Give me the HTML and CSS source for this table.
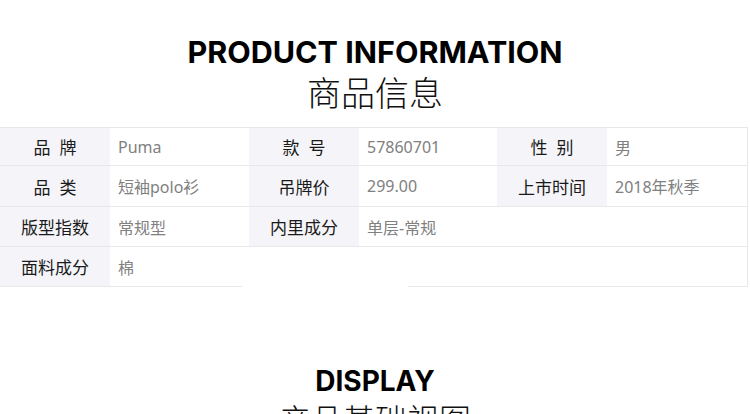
FILE: index.html
```html
<!DOCTYPE html>
<html lang="zh-CN">
<head>
    <meta charset="UTF-8">
    <meta name="viewport" content="width=device-width, initial-scale=1.0">
    <title>商品信息</title>
    <link rel="stylesheet" href="styles.css">
</head>
<body>
    <!-- Product information title -->
    <div class="section-title">
        <h2>PRODUCT INFORMATION</h2>
        <p>商品信息</p>
    </div>

    <!-- Info table -->
    <div class="info-table">
        <div class="row first">
            <div class="cell label"><span class="spaced">品牌</span></div>
            <div class="cell value w139">Puma</div>
            <div class="cell label"><span class="spaced">款号</span></div>
            <div class="cell value w138">57860701</div>
            <div class="cell label"><span class="spaced">性别</span></div>
            <div class="cell value grow">男</div>
        </div>
        <div class="row second">
            <div class="cell label"><span class="spaced">品类</span></div>
            <div class="cell value w139">短袖polo衫</div>
            <div class="cell label">吊牌价</div>
            <div class="cell value w138">299.00</div>
            <div class="cell label">上市时间</div>
            <div class="cell value grow">2018年秋季</div>
        </div>
        <div class="row">
            <div class="cell label">版型指数</div>
            <div class="cell value w139">常规型</div>
            <div class="cell label">内里成分</div>
            <div class="cell value grow">单层-常规</div>
        </div>
        <div class="row">
            <div class="cell label">面料成分</div>
            <div class="cell value w132">棉</div>
            <div class="cell blank"></div>
            <div class="cell value grow"></div>
        </div>
    </div>

    <!-- Display title -->
    <div class="section-title display">
        <h2>DISPLAY</h2>
        <p>产品基础视图</p>
    </div>
</body>
</html>
```

FILE: styles.css
```css
/* General Styles */
body {
    margin: 0;
    padding: 0;
    background-color: #fff;
    font-family: "Noto Sans", "Noto Sans CJK SC", sans-serif;
    overflow: hidden;
}

/* Section titles */
.section-title {
    text-align: center;
    padding-top: 34px;
}

.section-title h2 {
    margin: 0;
    font-family: Inter, "Liberation Sans", sans-serif;
    font-weight: 700;
    font-size: 30.5px;
    line-height: 36px;
    color: #000;
}

.section-title p {
    margin: 0;
    font-family: "Noto Sans CJK SC", sans-serif;
    font-weight: 300;
    font-size: 34px;
    line-height: 44px;
    color: #111;
}

.section-title.display {
    padding-top: 80px;
}

.section-title.display h2 {
    font-size: 28px;
    line-height: 29px;
}

.section-title.display p {
    font-size: 32px;
}

/* Info table */
.info-table {
    margin-top: 13px;
    width: 748px;
    border-top: 1px solid #e8e8e8;
}

.row {
    display: flex;
    height: 40px;
}

.row.first {
    height: 38px;
}

.row.second {
    height: 41px;
}

.cell {
    box-sizing: border-box;
    display: flex;
    align-items: center;
    border-bottom: 1px solid #e8e8e8;
}

.label {
    width: 110px;
    justify-content: center;
    background-color: #f5f5f9;
    color: #1a1a1a;
    font-size: 17px;
}

/* two-character labels are spread apart */
.spaced {
    letter-spacing: 9px;
    padding-left: 9px;
}

.value {
    padding-left: 8px;
    color: #808080;
    font-size: 16px;
}

.w139 { width: 139px; }
.w138 { width: 138px; }
.w132 { width: 132px; }

.grow {
    flex: 1;
    border-right: 1px solid #e8e8e8;
}

.blank {
    width: 166px;
    border-bottom: none;
}
```
